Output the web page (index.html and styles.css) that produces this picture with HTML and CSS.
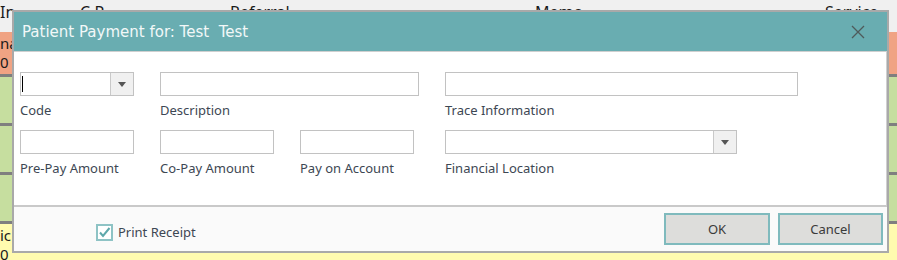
FILE: index.html
```html
<!DOCTYPE html>
<html lang="en">

<head>
    <meta charset="UTF-8">
    <title>Patient Payment</title>
    <link rel="stylesheet" href="styles.css">
</head>

<body>
    <!-- Schedule grid behind the dialog -->
    <div class="grid">
        <div class="head-row">
            <span class="h h-ins">In</span>
            <span class="h h-cp">C.P</span>
            <span class="h h-ref">Referral</span>
            <span class="h h-memo">Memo</span>
            <span class="h h-svc">Service</span>
        </div>
        <div class="row salmon"><div class="cell">na<br>0</div></div>
        <div class="row green"><div class="cell"></div></div>
        <div class="row green"><div class="cell"></div></div>
        <div class="row green"><div class="cell"></div></div>
        <div class="row yellow"><div class="cell">ic<br>0</div></div>
    </div>

    <!-- Patient Payment dialog -->
    <div class="dialog">
        <div class="titlebar">
            <span class="title">Patient Payment for: Test&nbsp; Test</span>
            <svg class="close" width="14" height="14" viewBox="0 0 14 14">
                <path d="M1 1 L13 13 M13 1 L1 13" stroke="#4f5a5b" stroke-width="1.3" fill="none" />
            </svg>
        </div>
        <div class="panel">
            <div class="fields">
                <div class="field">
                    <div class="box combo w-small">
                        <span class="value"><span class="cursor"></span></span>
                        <span class="drop"><svg width="8" height="5" viewBox="0 0 8 5"><path d="M0 0 H8 L4 5 Z" fill="#555" /></svg></span>
                    </div>
                    <label>Code</label>
                </div>
                <div class="field span-2">
                    <div class="box w-desc"></div>
                    <label>Description</label>
                </div>
                <div class="field">
                    <div class="box w-trace"></div>
                    <label>Trace Information</label>
                </div>

                <div class="field">
                    <div class="box w-small"></div>
                    <label>Pre-Pay Amount</label>
                </div>
                <div class="field">
                    <div class="box w-small"></div>
                    <label>Co-Pay Amount</label>
                </div>
                <div class="field">
                    <div class="box w-small"></div>
                    <label>Pay on Account</label>
                </div>
                <div class="field">
                    <div class="box combo w-loc">
                        <span class="value"></span>
                        <span class="drop"><svg width="8" height="5" viewBox="0 0 8 5"><path d="M0 0 H8 L4 5 Z" fill="#555" /></svg></span>
                    </div>
                    <label>Financial Location</label>
                </div>
            </div>
        </div>
        <div class="footer">
            <div class="check">
                <span class="checkbox">
                    <svg width="13" height="13" viewBox="0 0 13 13"><path d="M2 6.5 L5 10 L11.5 2" stroke="#5ea8ab" stroke-width="2" fill="none" /></svg>
                </span>
                <span class="check-label">Print Receipt</span>
            </div>
            <div class="buttons">
                <button class="btn btn-ok">OK</button>
                <button class="btn btn-cancel">Cancel</button>
            </div>
        </div>
    </div>
</body>

</html>
```

FILE: styles.css
```css
/* General */
body {
    margin: 0;
    font-family: "Noto Sans", "DejaVu Sans", sans-serif;
    background: #f0f0f0;
    overflow: hidden;
}

/* Grid in the background */
.grid {
    width: 897px;
}

.head-row {
    display: flex;
    height: 32px;
    box-sizing: border-box;
    padding-top: 2px;
    background: #f0f0f0;
    font-size: 16px;
    color: #1a1a1a;
    line-height: 20px;
}

.h {
    display: block;
}

.h-ins { width: 80px; }
.h-cp { width: 150px; }
.h-ref { width: 305px; }
.h-memo { width: 290px; }

.row {
    border-bottom: 3px solid #7f7f7f;
}

.row .cell {
    font-size: 15px;
    line-height: 19px;
    color: #1a1a1a;
    padding-top: 2px;
}

.salmon {
    height: 42px;
    background: #f0a383;
}

.green {
    height: 46px;
    background: #c6de9f;
}

.yellow {
    height: 40px;
    background: #fffbaf;
    border-bottom: none;
}

/* Dialog */
.dialog {
    position: absolute;
    left: 12px;
    top: 10px;
    width: 877px;
    height: 243px;
    box-sizing: border-box;
    border: 2px solid #a9a9a9;
    background: #fafafa;
    display: flex;
    flex-direction: column;
}

.titlebar {
    height: 39px;
    background: #69adb1;
    border-bottom: 1px solid #cfcfcf;
    display: flex;
    align-items: center;
    justify-content: space-between;
    padding: 0 22px 0 8px;
}

.title {
    color: #f2f8f8;
    font-size: 15px;
    font-family: "DejaVu Sans", sans-serif;
}

.close {
    display: block;
}

.panel {
    height: 155px;
    box-sizing: border-box;
    background: #fff;
    border-right: 1px solid #d0d0d0;
    border-bottom: 2px solid #c9c9c9;
    padding: 20px 0 0 6px;
}

.fields {
    display: grid;
    grid-template-columns: 140px 140px 145px 1fr;
    row-gap: 11px;
}

.span-2 {
    grid-column: span 2;
}

.box {
    height: 24px;
    box-sizing: border-box;
    border: 1px solid #c2c2c2;
    background: #fff;
}

.w-small { width: 114px; }
.w-desc { width: 259px; }
.w-trace { width: 353px; }
.w-loc { width: 292px; }

.combo {
    display: flex;
}

.combo .value {
    flex: 1;
    padding: 3px 0 0 1px;
}

.cursor {
    display: block;
    width: 1px;
    height: 16px;
    background: #000;
}

.drop {
    width: 22px;
    background: #f0f0f0;
    border-left: 1px solid #c9c9c9;
    display: flex;
    align-items: center;
    justify-content: center;
}

.field label {
    display: block;
    margin-top: 5px;
    font-size: 13px;
    line-height: 18px;
    color: #3d4753;
}

/* Footer */
.footer {
    flex: 1;
    display: flex;
    justify-content: space-between;
    padding: 6px 4px 0 82px;
}

.check {
    display: flex;
    align-items: center;
    height: 18px;
    margin-top: 10px;
}

.checkbox {
    width: 17px;
    height: 17px;
    box-sizing: border-box;
    border: 2px solid #8ec3c5;
    background: #fff;
    display: flex;
    align-items: center;
    justify-content: center;
}

.check-label {
    margin-left: 5px;
    font-size: 13px;
    color: #3d4753;
}

.buttons {
    display: flex;
    gap: 8px;
}

.btn {
    height: 32px;
    box-sizing: border-box;
    border: 2px solid #7fbabd;
    background: #dddddb;
    font-family: "Noto Sans", sans-serif;
    font-size: 13px;
    color: #3a3a3a;
    padding: 0;
}

.btn-ok { width: 106px; }
.btn-cancel { width: 105px; }
```
